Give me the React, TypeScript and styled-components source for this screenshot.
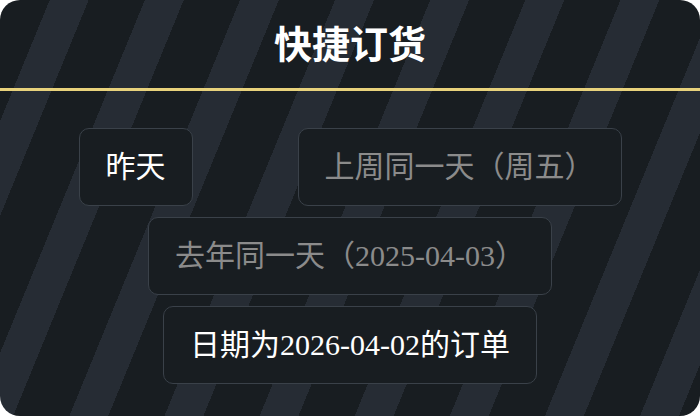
import React from "react"
import styled, { createGlobalStyle } from "styled-components"

const GlobalStyle = createGlobalStyle`
  html, body {
    margin: 0;
    padding: 0;
    background: #ffffff;
  }
  * {
    box-sizing: border-box;
  }
`

const Card = styled.div`
  width: 700px;
  height: 416px;
  border-radius: 20px;
  overflow: hidden;
  font-family: "Liberation Serif", "Times New Roman", "Noto Sans CJK SC", serif;
  background-color: #181d21;
  background-image: repeating-linear-gradient(
    112.3deg,
    #181d21 0 46px,
    #262c34 46px 82px,
    #181d21 82px 88px
  );
  display: flex;
  flex-direction: column;
`

const Header = styled.header`
  height: 91px;
  border-bottom: 3px solid #e8d27c;
  display: flex;
  align-items: center;
  justify-content: center;
`

const Title = styled.h1`
  margin: 0;
  color: #ffffff;
  font-family: "Noto Sans CJK SC", sans-serif;
  font-size: 38px;
  font-weight: 700;
  line-height: 1;
  padding-bottom: 4px;
`

const Options = styled.div`
  width: 648px;
  margin: 37px auto 0;
  display: flex;
  flex-wrap: wrap;
  justify-content: space-around;
  row-gap: 11px;
`

const Option = styled.button<{ $muted?: boolean }>`
  height: 78px;
  padding: 0 26px;
  border: 1px solid #3a4149;
  border-radius: 10px;
  background: #181d21;
  color: ${(p) => (p.$muted ? "#8b8b8b" : "#ffffff")};
  font-family: "Liberation Serif", "Times New Roman", "Noto Sans CJK SC", serif;
  font-size: 30px;
  line-height: 44px;
  white-space: nowrap;
  cursor: pointer;
`

const App: React.FC = () => {
  return (
    <>
      <GlobalStyle />
      <Card lang="zh-CN">
        <Header>
          <Title>快捷订货</Title>
        </Header>
        <Options>
          <Option>昨天</Option>
          <Option $muted>上周同一天（周五）</Option>
          <Option $muted>去年同一天（2025-04-03）</Option>
          <Option>日期为2026-04-02的订单</Option>
        </Options>
      </Card>
    </>
  )
}

export default App
